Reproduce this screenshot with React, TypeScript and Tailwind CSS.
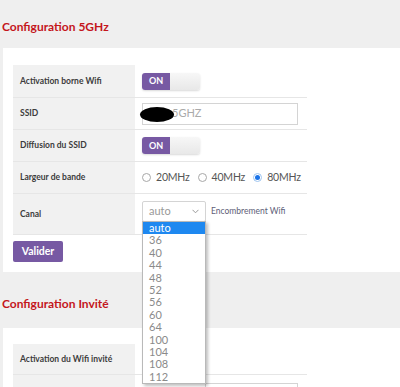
import React from 'react';

const canaux = ['auto', '36', '40', '44', '48', '52', '56', '60', '64', '100', '104', '108', '112'];

const Toggle: React.FC = () => (
  <div className="flex h-[17px] w-[58px] rounded-[3px] shadow-[0_1px_2px_rgba(0,0,0,0.15)]">
    <div className="flex w-[28px] items-center justify-center rounded-l-[3px] bg-[#7759a3] text-[9px] font-bold text-white">
      ON
    </div>
    <div className="flex-1 rounded-r-[3px] bg-gradient-to-b from-[#f7f7f7] to-[#e8e8e8]" />
  </div>
);

const Radio: React.FC<{ label: string; checked?: boolean }> = ({ label, checked }) => (
  <label className="flex items-center gap-[5px]">
    <span
      className={
        checked
          ? 'flex h-[9px] w-[9px] items-center justify-center rounded-full border border-[#9cc3ef] bg-white'
          : 'h-[9px] w-[9px] rounded-full border border-[#a8a8a8] bg-white'
      }
    >
      {checked && <span className="h-[5px] w-[5px] rounded-full bg-[#1a73e8]" />}
    </span>
    <span className="text-[10.5px] tracking-[-0.2px] text-[#555]">{label}</span>
  </label>
);

const Row: React.FC<{ label: string; h: string; top?: boolean; children?: React.ReactNode }> = ({
  label,
  h,
  top,
  children
}) => (
  <div className={`grid grid-cols-[122px_1fr] border-b border-[#e6e6e6] ${h}`}>
    <div className="flex items-center bg-[#f1f1f1] pl-[7px] text-[8.5px] font-bold text-[#3c3c3c]">{label}</div>
    <div className={top ? 'flex items-start pl-[7px] pt-[7px]' : 'flex items-center pl-[7px]'}>{children}</div>
  </div>
);

export default function App() {
  return (
    <div className="h-[387px] overflow-hidden bg-[#efefef] font-['Lato','Liberation_Sans',sans-serif]">
      <h2 className="pl-[2px] pt-[20px] text-[12px] font-bold leading-[14px] text-[#c4161c]">Configuration 5GHz</h2>

      <div className="ml-[3px] mt-[14px] bg-white pb-[10px] pl-[10px] pt-[17px]">
        <div className="w-[294px]">
          <Row label="Activation borne Wifi" h="h-[33px]">
            <Toggle />
          </Row>
          <Row label="SSID" h="h-[32px]">
            <div className="relative flex h-[22px] w-[156px] items-center border border-[#d4d4d4] pl-[29px] text-[11px] text-[#aaa]">
              <span className="absolute left-[-3px] top-[3px] h-[15px] w-[34px] rounded-[50%] bg-black" />
              5GHZ
            </div>
          </Row>
          <Row label="Diffusion du SSID" h="h-[32px]">
            <Toggle />
          </Row>
          <Row label="Largeur de bande" h="h-[32px]">
            <div className="flex items-center gap-[8px]">
              <Radio label="20MHz" />
              <Radio label="40MHz" />
              <Radio label="80MHz" checked />
            </div>
          </Row>
          <Row label="Canal" h="h-[41px]" top>
            <div className="flex items-center gap-[5px]">
              <div className="relative">
                <div className="flex h-[21px] w-[64px] items-center justify-between rounded-[2px] border border-[#d4d4d4] px-[6px] text-[11px] text-[#999]">
                  auto
                  <svg width="7" height="5" viewBox="0 0 7 5" className="text-[#999]">
                    <path d="M0.5 0.8 L3.5 3.8 L6.5 0.8" fill="none" stroke="currentColor" strokeWidth="1" />
                  </svg>
                </div>
                <ul className="absolute left-0 top-[20px] z-10 w-[64px] border border-[#b9b9b9] bg-white shadow-[2px_2px_3px_rgba(0,0,0,0.25)]">
                  {canaux.map((c, i) => (
                    <li
                      key={c}
                      className={
                        i === 0
                          ? 'h-[12.4px] bg-[#1e88f0] pl-[6px] text-[11px] leading-[12.4px] text-white'
                          : 'h-[12.4px] pl-[6px] text-[11px] leading-[12.4px] text-[#8a8a8a]'
                      }
                    >
                      {c}
                    </li>
                  ))}
                </ul>
              </div>
              <span className="text-[8.5px] text-[#5e5e78]">Encombrement Wifi</span>
            </div>
          </Row>
        </div>
        <button className="mt-[6px] h-[21px] w-[50px] rounded-[2px] bg-[#7759a3] text-[10.5px] font-bold text-white">
          Valider
        </button>
      </div>

      <h2 className="pl-[2px] pt-[25px] text-[12px] font-bold leading-[14px] text-[#c4161c]">Configuration Invité</h2>

      <div className="ml-[3px] mt-[17px] bg-white pl-[10px] pt-[16px]">
        <div className="w-[294px]">
          <Row label="Activation du Wifi invité" h="h-[31px]" />
          <div className="grid h-[40px] grid-cols-[122px_1fr]">
            <div className="bg-[#f1f1f1]" />
            <div className="pl-[70px] pt-[8px]">
              <div className="h-[22px] w-[93px] border border-[#d4d4d4]" />
            </div>
          </div>
        </div>
      </div>
    </div>
  );
}
